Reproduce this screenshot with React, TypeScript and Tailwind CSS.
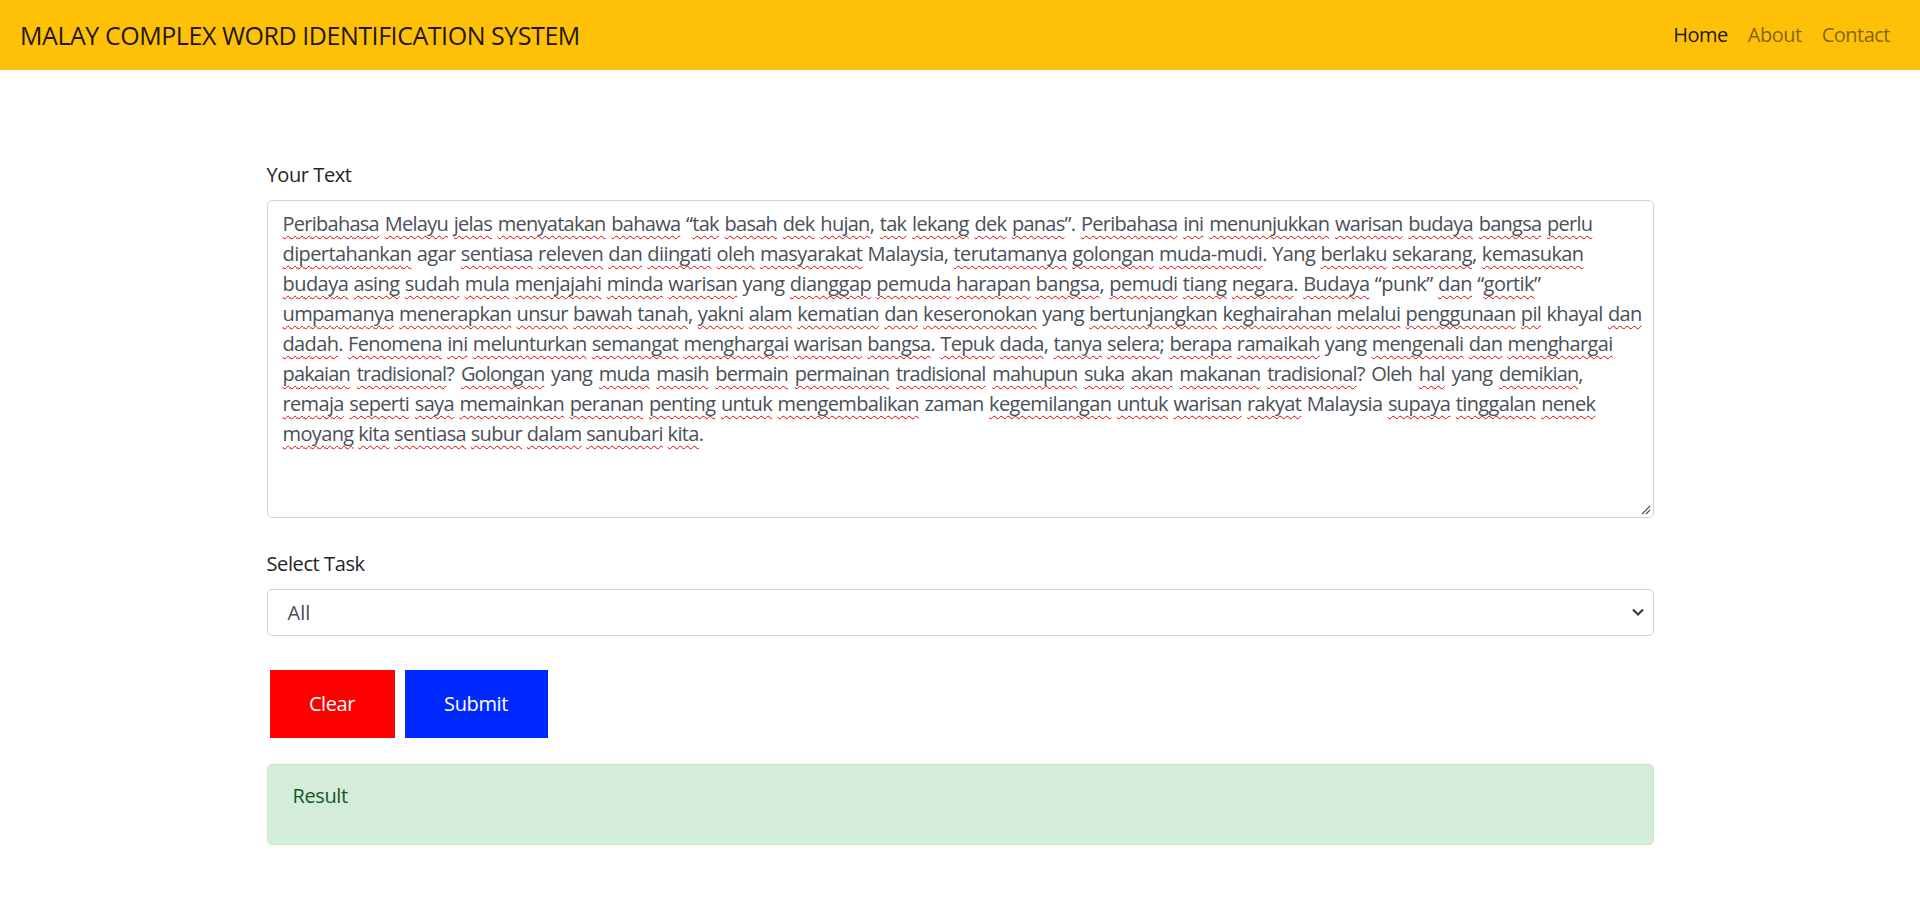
import React from "react";

type Line = { text: string; cls: string };

const LINES: Line[] = [
  {
    text: "Peribahasa Melayu jelas menyatakan bahawa “tak basah dek hujan, tak lekang dek panas”. Peribahasa ini menunjukkan warisan budaya bangsa perlu",
    cls: "w-[1310px] tracking-[-0.037em] text-justify [text-align-last:justify]",
  },
  {
    text: "dipertahankan !agar sentiasa releven dan diingati oleh masyarakat !Malaysia, terutamanya golongan muda-mudi. !Yang berlaku sekarang, kemasukan",
    cls: "w-[1301px] tracking-[-0.03em] text-justify [text-align-last:justify]",
  },
  {
    text: "budaya asing sudah mula menjajahi minda warisan !yang dianggap pemuda harapan bangsa, pemudi tiang negara. Budaya !“punk” dan “gortik”",
    cls: "w-[1258px] tracking-[-0.027em] text-justify [text-align-last:justify]",
  },
  {
    text: "umpamanya menerapkan unsur bawah tanah, yakni alam kematian dan keseronokan !yang bertunjangkan keghairahan melalui penggunaan pil !khayal dan",
    cls: "w-[1359px] tracking-[-0.032em] text-justify [text-align-last:justify]",
  },
  {
    text: "dadah. Fenomena ini melunturkan semangat menghargai warisan bangsa. Tepuk dada, tanya selera; berapa ramaikah !yang mengenali dan menghargai",
    cls: "w-[1330px] tracking-[-0.032em] text-justify [text-align-last:justify]",
  },
  {
    text: "pakaian tradisional? Golongan !yang muda masih bermain permainan tradisional mahupun suka akan makanan tradisional? !Oleh hal !yang demikian,",
    cls: "w-[1300px] tracking-[-0.042em] text-justify [text-align-last:justify]",
  },
  {
    text: "remaja seperti saya memainkan peranan penting untuk mengembalikan !zaman kegemilangan untuk warisan rakyat !Malaysia supaya tinggalan nenek",
    cls: "w-[1313px] tracking-[-0.033em] text-justify [text-align-last:justify]",
  },
  {
    text: "moyang kita sentiasa subur dalam sanubari kita.",
    cls: "tracking-[-0.031em]",
  },
];

function Word({ raw }: { raw: string }) {
  const plain = raw.startsWith("!");
  const w = plain ? raw.slice(1) : raw;
  if (plain) return <span>{w}</span>;
  const m = w.match(/^([^\p{L}]*)(.*?)([^\p{L}]*)$/u);
  const pre = m ? m[1] : "";
  const core = m ? m[2] : w;
  const post = m ? m[3] : "";
  return (
    <span>
      {pre}
      <span className="underline decoration-wavy decoration-[#e00000] decoration-1 underline-offset-[4px] [text-decoration-skip-ink:none]">
        {core}
      </span>
      {post}
    </span>
  );
}

export default function App() {
  const font = "font-['Open_Sans','Noto_Sans',sans-serif]";
  return (
    <div className={`min-h-screen bg-white ${font} text-[#212529]`}>
      <nav className="h-[70px] bg-[#ffc107] flex items-center justify-between px-[20px]">
        <div className="text-[25px] leading-[37px] text-black/90 tracking-[-0.018em]">
          MALAY COMPLEX WORD IDENTIFICATION SYSTEM
        </div>
        <ul className="flex text-[20px] leading-[30px] tracking-[-0.025em]">
          <li className="px-[10px] text-black/90">Home</li>
          <li className="px-[10px] text-black/50">About</li>
          <li className="px-[10px] text-black/50">Contact</li>
        </ul>
      </nav>

      <main className="w-[1387px] mx-auto pt-[90px]">
        <label className="block text-[20px] leading-[30px] mb-[10px] tracking-[-0.02em]">Your Text</label>
        <div className="relative h-[318px] border border-[#ced4da] rounded-[5px] px-[15px] py-[8px] text-[20px] leading-[30px] text-[#495057] overflow-hidden">
          {LINES.map((line, i) => (
            <div key={i} className={`whitespace-nowrap ${line.cls}`}>
              {line.text.split(" ").map((w, j) => (
                <React.Fragment key={j}>
                  {j > 0 ? " " : ""}
                  <Word raw={w} />
                </React.Fragment>
              ))}
            </div>
          ))}
          <svg
            className="absolute right-[2px] bottom-[2px]"
            width="10"
            height="10"
            viewBox="0 0 10 10"
          >
            <line x1="9" y1="1" x2="1" y2="9" stroke="#555" strokeWidth="1.2" />
            <line x1="9" y1="5" x2="5" y2="9" stroke="#555" strokeWidth="1.2" />
          </svg>
        </div>

        <label className="block text-[20px] leading-[30px] mt-[31px] mb-[10px] tracking-[-0.02em]">Select Task</label>
        <div className="relative h-[47px] border border-[#ced4da] rounded-[5px] flex items-center pl-[20px] text-[20px] leading-[30px] text-[#495057]">
          <span>All</span>
          <svg
            className="absolute right-[8px] top-[17px]"
            width="14"
            height="10"
            viewBox="0 0 14 10"
          >
            <path d="M2 2.5 L7 7.5 L12 2.5" fill="none" stroke="#343a40" strokeWidth="2.2" />
          </svg>
        </div>

        <div className="flex gap-[10px] mt-[34px] pl-[3px]">
          <button className="w-[125px] h-[68px] bg-[#ff0000] text-white text-[20px] tracking-[-0.02em]">Clear</button>
          <button className="w-[143px] h-[68px] bg-[#0029ff] text-white text-[20px] tracking-[-0.02em]">Submit</button>
        </div>

        <div className="mt-[26px] h-[81px] bg-[#d4edda] border border-[#c3e6cb] rounded-[5px] px-[25px] pt-[16px] text-[20px] leading-[30px] text-[#155724] tracking-[-0.02em]">
          Result
        </div>
      </main>
    </div>
  );
}
